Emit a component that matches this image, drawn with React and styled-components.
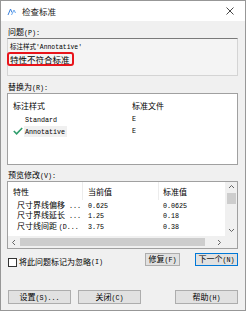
import React from "react";
import styled, { createGlobalStyle } from "styled-components";

const GlobalStyle = createGlobalStyle`
  html, body {
    margin: 0;
    padding: 0;
    background: #ffffff;
  }
  * {
    box-sizing: border-box;
  }
`;

const Window = styled.div`
  width: 246px;
  height: 311px;
  border: 1px solid #979797;
  background: #f0f0f0;
  display: flex;
  flex-direction: column;
  font-family: "Noto Sans CJK SC", "Noto Sans", sans-serif;
  font-size: 8px;
  color: #000;
  overflow: hidden;
`;

const TitleBar = styled.div`
  height: 20px;
  background: #ffffff;
  display: flex;
  align-items: center;
  padding: 0 0 0 6px;
`;

const Title = styled.div`
  margin-left: 6px;
  font-size: 8.5px;
  line-height: 12px;
  color: #222;
`;

const CloseButton = styled.div`
  margin-left: auto;
  width: 30px;
  height: 20px;
  display: flex;
  align-items: center;
  justify-content: center;
`;

const Body = styled.div`
  flex: 1;
  display: flex;
  flex-direction: column;
  padding: 0 7px 0 6px;
`;

const FieldLabel = styled.div`
  margin-top: ${(p) => p.$top}px;
  height: 12px;
  line-height: 12px;
  padding-left: 1px;
`;

const Mono = styled.span`
  font-family: "Liberation Mono", "DejaVu Sans Mono", monospace;
  font-size: ${(p) => p.$size || 6.7}px;
  color: #000;
`;

const ProblemBox = styled.div`
  height: 38px;
  background: #f4f4f4;
  border: 1px solid #d4d4d4;
  border-top-color: #7a7a7a;
  padding: 1px 1px 0 2px;
`;

const ProblemLine = styled.div`
  height: 12px;
  line-height: 12px;
  font-size: ${(p) => p.$size || 8.5}px;
  white-space: nowrap;
`;

const Highlight = styled.span`
  display: inline-block;
  margin-left: -3px;
  padding: 0 2px 0 1px;
  border: 2px solid #e8141b;
  border-radius: 3px;
  line-height: 10px;
`;

const ListBox = styled.div`
  height: 72px;
  background: #ffffff;
  border: 1px solid #a0a0a0;
  padding-top: 4px;
  display: flex;
  flex-direction: column;
`;

const ListRow = styled.div`
  display: grid;
  grid-template-columns: 119px 1fr;
  height: ${(p) => (p.$header ? 15 : 12)}px;
  align-items: center;
  padding-left: 5px;
`;

const NameCell = styled.div`
  display: flex;
  align-items: center;
  white-space: nowrap;
`;

const CheckSlot = styled.div`
  width: 11px;
  height: 10px;
  display: flex;
  align-items: center;
`;

const ItemName = styled.span`
  display: inline-block;
  padding: 0 2px 0 1px;
  line-height: 10px;
  background: ${(p) => (p.$selected ? "#f0f0f0" : "transparent")};
`;

const Grid = styled.div`
  height: 68px;
  background: #ffffff;
  border: 1px solid #a0a0a0;
  display: flex;
  flex-direction: column;
`;

const GridMain = styled.div`
  flex: 1;
  display: flex;
  min-height: 0;
`;

const GridTable = styled.div`
  flex: 1;
  overflow: hidden;
`;

const GridRow = styled.div`
  display: grid;
  grid-template-columns: 75px 76px 1fr;
  height: ${(p) => (p.$header ? 18 : 10.5)}px;
  align-items: center;
  white-space: nowrap;
`;

const HeadCell = styled.div`
  height: 100%;
  display: flex;
  align-items: center;
  padding-left: ${(p) => p.$pad}px;
  border-right: ${(p) => (p.$last ? "none" : "1px solid #ececec")};
`;

const Cell = styled.div`
  padding-left: ${(p) => p.$pad}px;
  line-height: 10px;
  overflow: hidden;
`;

const VScroll = styled.div`
  width: 12px;
  background: #f0f0f0;
  display: flex;
  flex-direction: column;
  align-items: center;
`;

const ScrollArrow = styled.div`
  width: 12px;
  height: ${(p) => p.$h || 12}px;
  display: flex;
  align-items: center;
  justify-content: center;
`;

const VThumb = styled.div`
  width: 9px;
  height: 11px;
  background: #cdcdcd;
`;

const VTrack = styled.div`
  flex: 1;
`;

const HScrollRow = styled.div`
  height: 12px;
  display: flex;
`;

const HScroll = styled.div`
  flex: 1;
  background: #f0f0f0;
  display: flex;
  align-items: center;
`;

const HThumb = styled.div`
  width: 185px;
  height: 8px;
  background: #cdcdcd;
`;

const HTrack = styled.div`
  flex: 1;
`;

const Corner = styled.div`
  width: 12px;
  background: #f0f0f0;
`;

const ActionRow = styled.div`
  margin-top: 4px;
  display: flex;
  align-items: flex-start;
`;

const CheckLabel = styled.label`
  display: flex;
  align-items: center;
  margin-top: 4px;
  line-height: 10px;
`;

const CheckBox = styled.span`
  width: 9px;
  height: 9px;
  border: 1px solid #333;
  background: #fff;
  margin: 0 2px 0 1px;
`;

const Button = styled.button`
  width: ${(p) => p.$w}px;
  height: ${(p) => p.$h || 13}px;
  margin-left: ${(p) => (p.$auto ? "auto" : `${p.$gap || 0}px`)};
  padding: 0;
  background: #e1e1e1;
  border: 1px solid ${(p) => (p.$focused ? "#0078d7" : "#adadad")};
  font-family: "Noto Sans CJK SC", "Noto Sans", sans-serif;
  font-size: 8px;
  line-height: 10px;
  color: #000;
  white-space: nowrap;
`;

const FooterRow = styled.div`
  margin-top: 23px;
  display: flex;
  padding-left: 1px;
`;

const AppIcon = () => (
  <svg width="9" height="9" viewBox="0 0 9 9">
    <path d="M1 8 L3.5 2 L5 5.5" fill="none" stroke="#3b7fd9" strokeWidth="1" />
    <path d="M4.5 8 L7 3 L8.5 6" fill="none" stroke="#6aa8f0" strokeWidth="1" />
  </svg>
);

const CloseIcon = () => (
  <svg width="8" height="8" viewBox="0 0 8 8">
    <path d="M0.5 0.5 L7.5 7.5 M7.5 0.5 L0.5 7.5" stroke="#333" strokeWidth="0.9" />
  </svg>
);

const CheckMark = () => (
  <svg width="10" height="8" viewBox="0 0 10 8">
    <path d="M0.8 4 L3.6 6.8 L9.2 1" fill="none" stroke="#2f9d6c" strokeWidth="1.6" />
  </svg>
);

const Arrow = ({ dir }) => {
  const paths = {
    up: "M1.5 4.5 L4 2 L6.5 4.5",
    down: "M1.5 2.5 L4 5 L6.5 2.5",
    left: "M4.5 1.5 L2 4 L4.5 6.5",
    right: "M2.5 1.5 L5 4 L2.5 6.5",
  };
  return (
    <svg width="7" height="7" viewBox="0 0 7 7">
      <path d={paths[dir]} fill="none" stroke="#555" strokeWidth="0.9" transform="translate(-0.5 -0.5)" />
    </svg>
  );
};

const previewRows = [
  { name: "尺寸界线偏移", suffix: " ...", current: "0.625", standard: "0.0625" },
  { name: "尺寸界线延长", suffix: " ...", current: "1.25", standard: "0.18" },
  { name: "尺寸线间距 ", suffix: "(D...", current: "3.75", standard: "0.38" },
];

export default function App() {
  return (
    <>
      <GlobalStyle />
      <Window>
        <TitleBar>
          <AppIcon />
          <Title>检查标准</Title>
          <CloseButton>
            <CloseIcon />
          </CloseButton>
        </TitleBar>
        <Body>
          <FieldLabel $top={5}>
            问题<Mono>(P):</Mono>
          </FieldLabel>
          <ProblemBox>
            <ProblemLine $size={6.5}>
              标注样式<Mono $size={6.4}>'Annotative'</Mono>
            </ProblemLine>
            <ProblemLine>
              <Highlight>特性不符合标准</Highlight>
            </ProblemLine>
          </ProblemBox>

          <FieldLabel $top={5}>
            替换为<Mono>(R):</Mono>
          </FieldLabel>
          <ListBox>
            <ListRow $header>
              <NameCell>标注样式</NameCell>
              <div>标准文件</div>
            </ListRow>
            <ListRow>
              <NameCell>
                <CheckSlot />
                <ItemName>
                  <Mono>Standard</Mono>
                </ItemName>
              </NameCell>
              <Mono>E</Mono>
            </ListRow>
            <ListRow>
              <NameCell>
                <CheckSlot>
                  <CheckMark />
                </CheckSlot>
                <ItemName $selected>
                  <Mono>Annotative</Mono>
                </ItemName>
              </NameCell>
              <Mono>E</Mono>
            </ListRow>
          </ListBox>

          <FieldLabel $top={4}>
            预览修改<Mono>(V):</Mono>
          </FieldLabel>
          <Grid>
            <GridMain>
              <GridTable>
                <GridRow $header>
                  <HeadCell $pad={5}>特性</HeadCell>
                  <HeadCell $pad={5}>当前值</HeadCell>
                  <HeadCell $pad={4} $last>
                    标准值
                  </HeadCell>
                </GridRow>
                {previewRows.map((r) => (
                  <GridRow key={r.name}>
                    <Cell $pad={9}>
                      {r.name}
                      <Mono>{r.suffix}</Mono>
                    </Cell>
                    <Cell $pad={5}>
                      <Mono>{r.current}</Mono>
                    </Cell>
                    <Cell $pad={4}>
                      <Mono>{r.standard}</Mono>
                    </Cell>
                  </GridRow>
                ))}
              </GridTable>
              <VScroll>
                <ScrollArrow $h={11}>
                  <Arrow dir="up" />
                </ScrollArrow>
                <VThumb />
                <VTrack />
                <ScrollArrow $h={11}>
                  <Arrow dir="down" />
                </ScrollArrow>
              </VScroll>
            </GridMain>
            <HScrollRow>
              <HScroll>
                <ScrollArrow>
                  <Arrow dir="left" />
                </ScrollArrow>
                <HThumb />
                <HTrack />
                <ScrollArrow>
                  <Arrow dir="right" />
                </ScrollArrow>
              </HScroll>
              <Corner />
            </HScrollRow>
          </Grid>

          <ActionRow>
            <CheckLabel>
              <CheckBox />
              将此问题标记为忽略<Mono>(I)</Mono>
            </CheckLabel>
            <Button $w={35} $auto>
              修复<Mono>(F)</Mono>
            </Button>
            <Button $w={43} $gap={15} $focused>
              下一个<Mono>(N)</Mono>
            </Button>
          </ActionRow>

          <FooterRow>
            <Button $w={63} $h={14}>
              设置<Mono>(S)...</Mono>
            </Button>
            <Button $w={63} $h={14} $gap={7}>
              关闭<Mono>(C)</Mono>
            </Button>
            <Button $w={63} $h={14} $auto>
              帮助<Mono>(H)</Mono>
            </Button>
          </FooterRow>
        </Body>
      </Window>
    </>
  );
}
